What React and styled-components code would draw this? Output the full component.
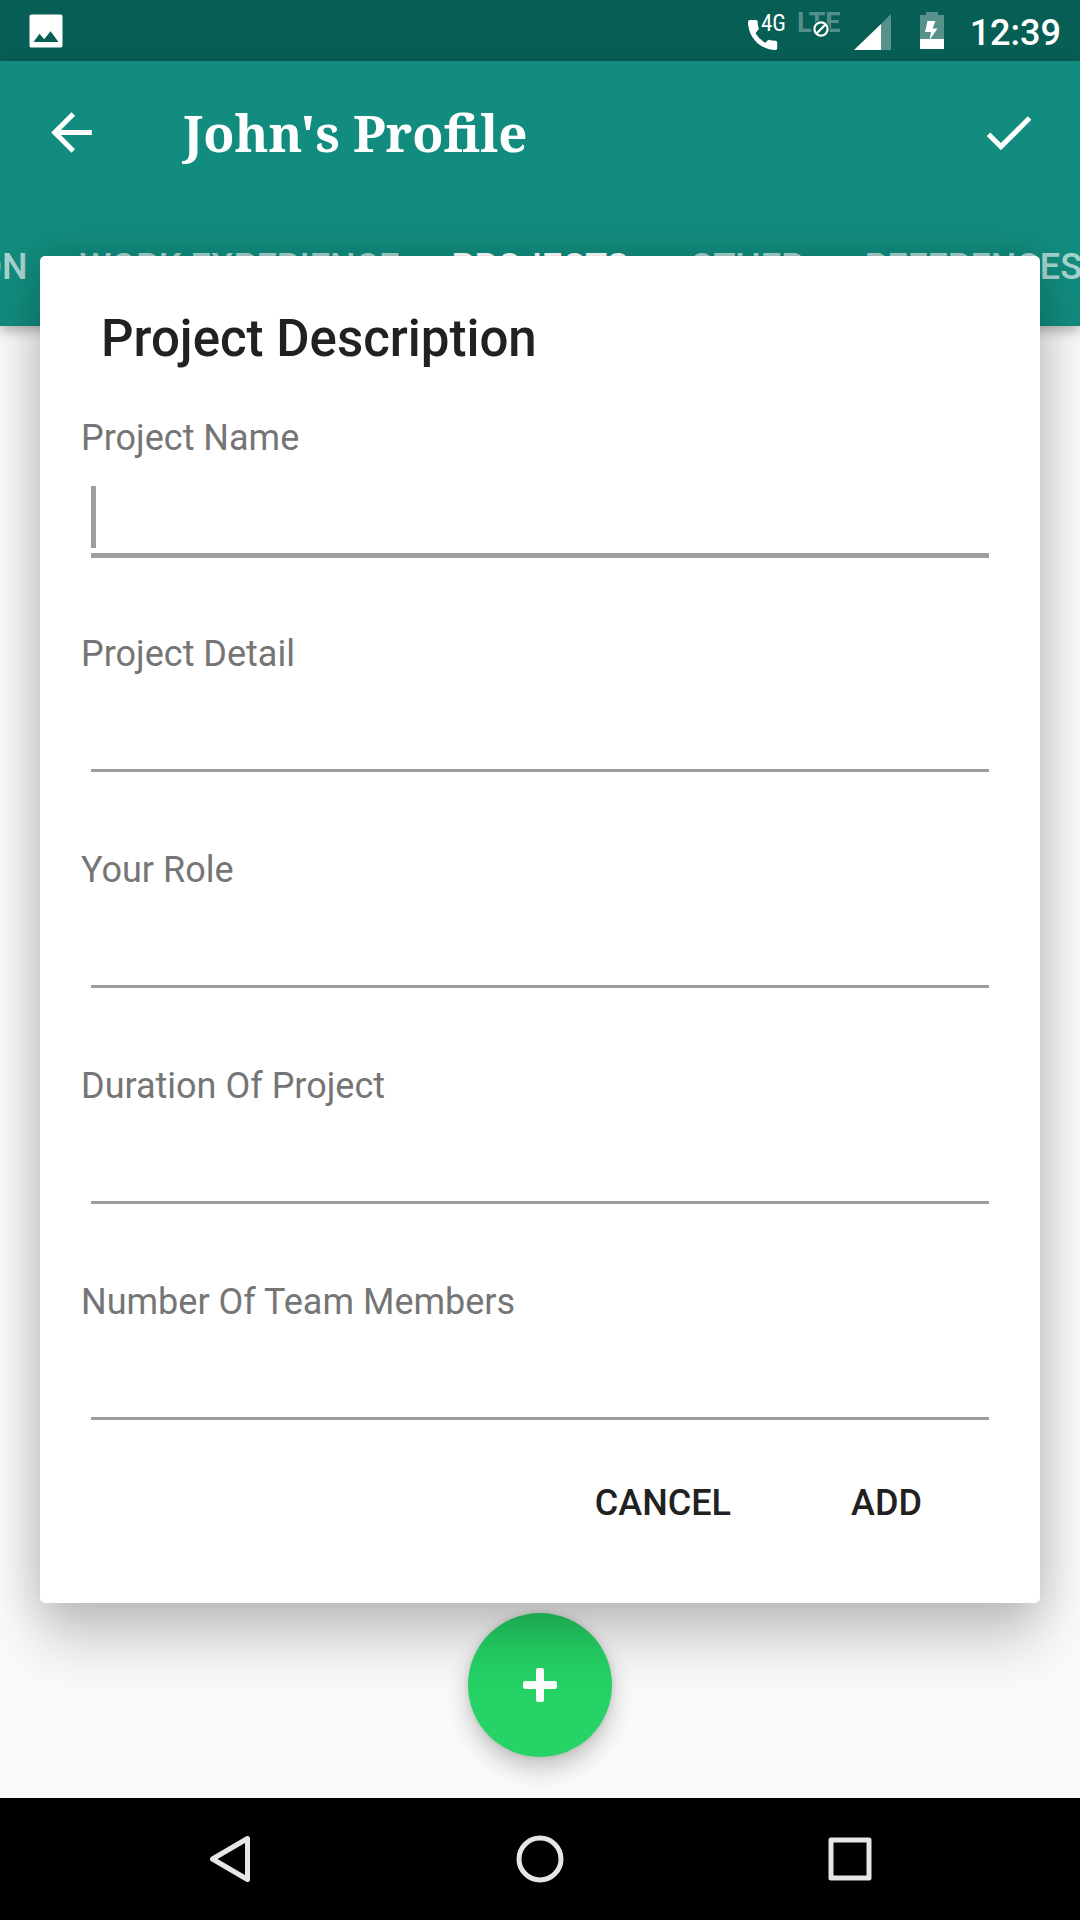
import React from 'react';
import styled, { createGlobalStyle, ThemeProvider } from 'styled-components';

const theme = {
  primary: '#128c7e',
  primaryDark: '#075e54',
  accent: '#25d366',
  background: '#fafafa',
  text: '#212121',
  label: '#757575',
  line: '#9e9e9e',
  navIcon: '#e6e6e6',
};

const GlobalStyle = createGlobalStyle`
  * {
    box-sizing: border-box;
  }
  body {
    margin: 0;
    font-family: Roboto, "Liberation Sans", sans-serif;
  }
  button, input {
    font-family: inherit;
  }
  button {
    padding: 0;
    border: 0;
    background: none;
    cursor: pointer;
  }
`;

const Screen = styled.div`
  display: flex;
  flex-direction: column;
  min-height: 100vh;
  overflow: hidden;
  background-color: ${props => props.theme.background};
`;

const StatusBar = styled.header`
  display: flex;
  align-items: center;
  justify-content: space-between;
  height: 61px;
  padding: 0 19px 0 24px;
  background-color: ${props => props.theme.primaryDark};
  color: #fff;
`;

const StatusIcons = styled.div`
  display: flex;
  align-items: center;
`;

const Clock = styled.time`
  margin-left: 22px;
  padding-top: 4px;
  font-size: 36px;
  font-weight: 500;
  line-height: 42px;
`;

const Content = styled.div`
  position: relative;
  display: flex;
  flex: 1;
  flex-direction: column;
`;

const AppBar = styled.div`
  background-color: ${props => props.theme.primary};
  box-shadow: 0 4px 12px rgba(0, 0, 0, 0.3);
  color: #fff;
`;

const Toolbar = styled.div`
  display: flex;
  align-items: center;
  height: 143px;
  padding: 0 41px;
`;

const Title = styled.h1`
  flex: 1;
  margin: 0 0 0 81px;
  padding-bottom: 2px;
  font-family: "Noto Serif", "Droid Serif", "Liberation Serif", serif;
  font-size: 51px;
  font-weight: 700;
  line-height: 60px;
`;

const IconButton = styled.button`
  display: flex;
  color: inherit;
`;

const Tabs = styled.nav`
  display: flex;
  justify-content: flex-end;
  height: 122px;
  margin-right: -28px;
`;

const Tab = styled.a`
  display: flex;
  flex: none;
  align-items: center;
  justify-content: center;
  min-width: 184px;
  padding: 4px 26px 0;
  color: ${props => (props.$active ? '#fff' : 'rgba(255, 255, 255, 0.65)')};
  font-size: 36px;
  font-weight: 500;
  text-decoration: none;
  text-transform: uppercase;
`;

const Page = styled.main`
  display: flex;
  flex: 1;
  align-items: flex-end;
  justify-content: center;
  padding-bottom: 41px;
`;

const Fab = styled.button`
  display: flex;
  align-items: center;
  justify-content: center;
  width: 144px;
  height: 144px;
  border-radius: 50%;
  background-color: ${props => props.theme.accent};
  box-shadow: 0 12px 24px rgba(0, 0, 0, 0.22), 0 0 6px rgba(0, 0, 0, 0.12);
`;

const Overlay = styled.div`
  position: absolute;
  inset: 0;
  display: flex;
  align-items: center;
  padding: 0 40px;
`;

const Dialog = styled.form`
  flex: 1;
  padding: 53px 41px 54px;
  border-radius: 5px;
  background-color: #fff;
  box-shadow: 0 40px 56px rgba(0, 0, 0, 0.18), 0 0 44px 4px rgba(0, 0, 0, 0.14);
`;

const DialogTitle = styled.h2`
  margin: 0 20px 48px;
  color: ${props => props.theme.text};
  font-size: 51px;
  font-weight: 500;
  line-height: 60px;
`;

const Fields = styled.div`
  display: grid;
  grid-auto-rows: 141px;
  row-gap: 75px;
`;

const Field = styled.div`
  display: flex;
  flex-direction: column;
`;

const Label = styled.label`
  color: ${props => props.theme.label};
  font-size: 36px;
  line-height: 42px;
`;

const Input = styled.input`
  box-sizing: content-box;
  height: 94px;
  margin: 0 10px;
  padding: 0;
  border: 0;
  border-bottom: ${props => (props.$focused ? 5 : 3)}px solid ${props => props.theme.line};
  outline: 0;
  background: ${props =>
    props.$focused
      ? `linear-gradient(${props.theme.line}, ${props.theme.line}) 0 27px / 5px 62px no-repeat`
      : 'none'};
  color: ${props => props.theme.text};
  font-size: 46px;
`;

const Actions = styled.div`
  display: flex;
  justify-content: flex-end;
  gap: 54px;
  padding: 35px 31px 0;
`;

const ActionButton = styled.button`
  min-width: 163px;
  height: 92px;
  padding: 0 20px;
  color: ${props => props.theme.text};
  font-size: 36px;
  font-weight: 500;
  text-transform: uppercase;
`;

const NavBar = styled.footer`
  display: flex;
  justify-content: center;
  height: 122px;
  background-color: #000;
`;

const NavButton = styled.button`
  display: flex;
  flex: 0 1 310px;
  align-items: center;
  justify-content: center;
  color: ${props => props.theme.navIcon};
`;

const tabs = ['Education', 'Work Experience', 'Projects', 'Other', 'References'];

const fields = [
  { id: 'name', label: 'Project Name' },
  { id: 'detail', label: 'Project Detail' },
  { id: 'role', label: 'Your Role' },
  { id: 'duration', label: 'Duration Of Project' },
  { id: 'members', label: 'Number Of Team Members' },
];

const PictureIcon = () => (
  <svg width="44" height="44" viewBox="0 0 24 24" fill="currentColor">
    <path
      fillRule="evenodd"
      d="M4 3h16a1 1 0 0 1 1 1v16a1 1 0 0 1-1 1H4a1 1 0 0 1-1-1V4a1 1 0 0 1 1-1zM5.200 18h13.600l-4.300-5.800-3.500 4.300-2.500-3z"
    />
  </svg>
);

// Phone, LTE, signal and battery share one drawing
const SignalIcons = () => (
  <svg width="200" height="61" viewBox="0 0 200 61" fill="#fff">
    <path d="M2 20h6q1.600 0 1.600 1.600 0 4 1.300 7.400l-3.400 4.300q3.700 6.300 9.700 9.400l3.200-3q3.600 1 7.200 1 1.600 0 1.600 1.600v6q0 1.700-1.600 1.700C12.500 50 0 37.500 0 22q0-2 2-2z" />
    <text x="13" y="31" fontSize="23" fontFamily='"Roboto Condensed", Roboto, sans-serif'>4G</text>
    <text x="49" y="32" fontSize="27" fontWeight="700" fillOpacity="0.32">LTE</text>
    <circle cx="73" cy="29" r="9" fill="#075e54" />
    <circle cx="73" cy="29" r="6.600" fill="none" stroke="#fff" strokeWidth="2.200" />
    <path d="M68.500 33.500l9-9" stroke="#fff" strokeWidth="2.400" />
    <path d="M143 14v36h-10V24z" fillOpacity="0.32" />
    <path d="M133 24v26h-27z" />
    <path d="M178 12h12v3h6v24h-24V15h6z" fillOpacity="0.32" />
    <path d="M172 39h24v10h-24z" />
    <path d="M179.500 21h8l-3 7.500h5L181.500 40l1.500-8h-6z" />
  </svg>
);

const BackIcon = () => (
  <svg width="61" height="61" viewBox="0 0 24 24" fill="currentColor">
    <path d="M20 11H7.830l5.590-5.590L12 4l-8 8 8 8 1.410-1.410L7.830 13H20z" />
  </svg>
);

const CheckIcon = () => (
  <svg width="61" height="61" viewBox="0 0 24 24" fill="currentColor">
    <path d="M9 16.170L4.830 12l-1.420 1.410L9 19 21 7l-1.410-1.410z" />
  </svg>
);

const PlusIcon = () => (
  <svg width="34" height="34" viewBox="0 0 34 34" fill="#fff">
    <rect x="13" width="8" height="34" rx="2" />
    <rect y="13" width="34" height="8" rx="2" />
  </svg>
);

const NavIcon = ({ children }) => (
  <svg
    width="48"
    height="48"
    viewBox="0 0 48 48"
    fill="none"
    stroke="currentColor"
    strokeWidth="5"
    strokeLinejoin="round"
  >
    {children}
  </svg>
);

const ProjectDialog = () => (
  <Overlay>
    <Dialog role="dialog" aria-labelledby="dialog-title" onSubmit={e => e.preventDefault()}>
      <DialogTitle id="dialog-title">Project Description</DialogTitle>
      <Fields>
        {fields.map((field, i) => (
          <Field key={field.id}>
            <Label htmlFor={field.id}>{field.label}</Label>
            <Input id={field.id} type="text" $focused={i === 0} />
          </Field>
        ))}
      </Fields>
      <Actions>
        <ActionButton type="button">Cancel</ActionButton>
        <ActionButton type="submit">Add</ActionButton>
      </Actions>
    </Dialog>
  </Overlay>
);

class App extends React.Component {
  render() {
    return (
      <ThemeProvider theme={theme}>
        <GlobalStyle />
        <Screen>
          <StatusBar>
            <PictureIcon />
            <StatusIcons>
              <SignalIcons />
              <Clock>12:39</Clock>
            </StatusIcons>
          </StatusBar>
          <Content>
            <AppBar>
              <Toolbar>
                <IconButton aria-label="Back">
                  <BackIcon />
                </IconButton>
                <Title>John's Profile</Title>
                <IconButton aria-label="Save">
                  <CheckIcon />
                </IconButton>
              </Toolbar>
              <Tabs>
                {tabs.map(tab => (
                  <Tab key={tab} href="#" $active={tab === 'Projects'}>
                    {tab}
                  </Tab>
                ))}
              </Tabs>
            </AppBar>
            <Page>
              <Fab aria-label="Add project">
                <PlusIcon />
              </Fab>
            </Page>
            <ProjectDialog />
          </Content>
          <NavBar>
            <NavButton aria-label="Back">
              <NavIcon>
                <path d="M41.500 3.500v41L6.500 24z" />
              </NavIcon>
            </NavButton>
            <NavButton aria-label="Home">
              <NavIcon>
                <circle cx="24" cy="24" r="21" />
              </NavIcon>
            </NavButton>
            <NavButton aria-label="Recent apps">
              <NavIcon>
                <rect x="5" y="5" width="38" height="38" />
              </NavIcon>
            </NavButton>
          </NavBar>
        </Screen>
      </ThemeProvider>
    );
  }
}

export default App;
